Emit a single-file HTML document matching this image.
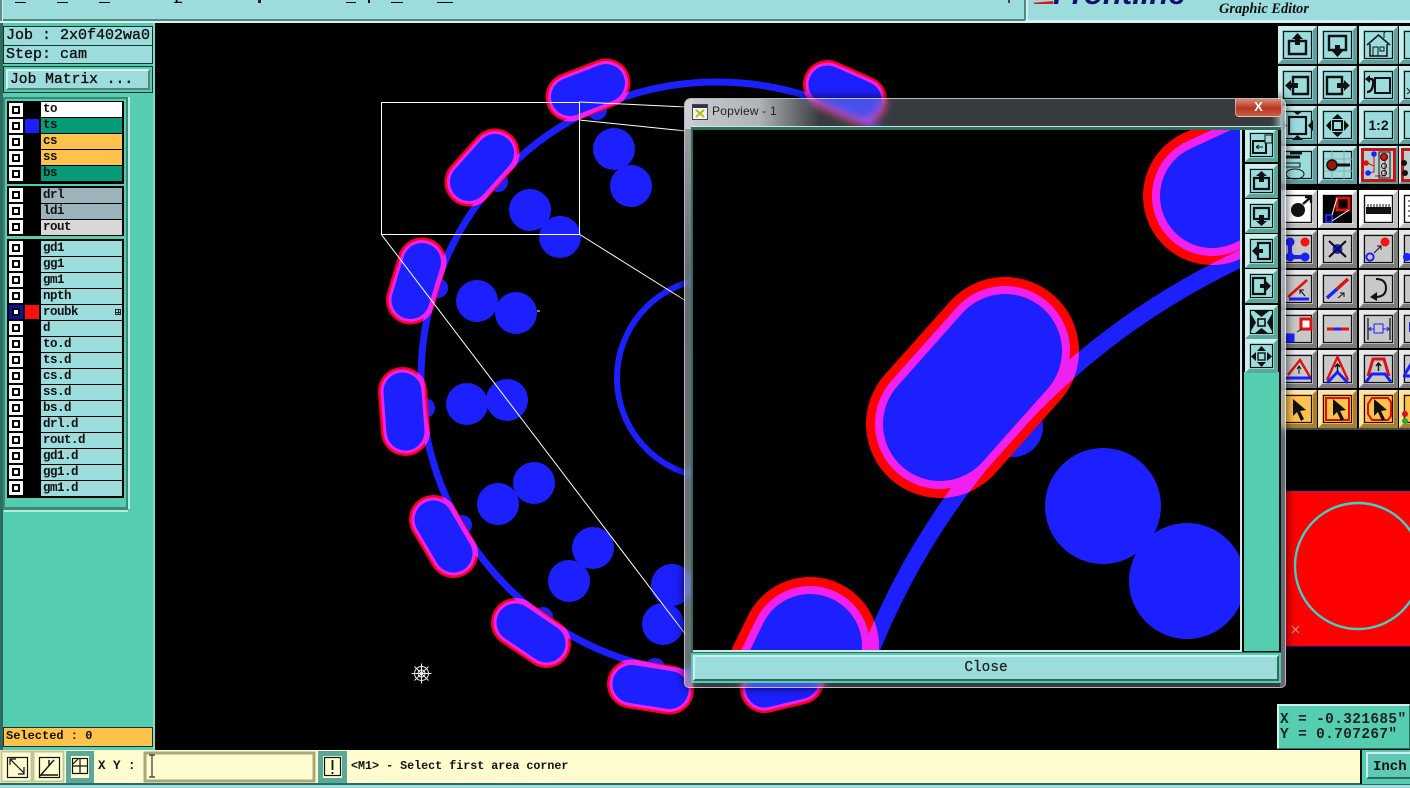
<!DOCTYPE html>
<html>
<head>
<meta charset="utf-8">
<style>
html,body{margin:0;padding:0;background:#000;width:1410px;height:788px;overflow:hidden}
div,svg,span{position:absolute;box-sizing:border-box}
body{font-family:"Liberation Mono",monospace;color:#111}
.t{white-space:pre;font-weight:bold}
.frame{background:#9ddcdc;border:1px solid #14352e}
.row{height:15px;left:41px;width:81px;background:#9ddcdc;font:bold 12.5px/14px "Liberation Mono",monospace;letter-spacing:-.5px;padding-left:2px;white-space:pre}
.chk{left:9px;width:14px;height:14px;background:#fff}
.chk:after{content:"";position:absolute;left:3px;top:3px;width:8px;height:8px;background:#fff;border:2px solid #000;box-sizing:border-box}
.blk{left:7px;width:117px;background:#000}
.bb{background:#fffdd0}
</style>
</head>
<body>
<svg width="1410" height="788" viewBox="0 0 1410 788" style="left:0;top:0">
<defs>
<path id="cp" d="M570 97L606 83M827.5 84.5L862.5 100M469 182L495 153M410.5 300L422 262M402.5 391.5L405.5 431.5M433.5 519.5L453.5 553.5M515.5 622.5L546.5 643.5M631.5 684L669.5 690M800 680L764.5 688.5" fill="none" stroke-linecap="round"/>
<mask id="m1" maskUnits="userSpaceOnUse" x="0" y="0" width="1410" height="788"><rect width="1410" height="788" fill="#000"/><use href="#cp" stroke="#fff" stroke-width="49"/></mask>
<path id="pp" d="M1005 351L940 424" fill="none" stroke-linecap="round"/>
<path id="pq" d="M1212 196L1320 146M810 646L771 726" fill="none" stroke-linecap="round"/>
<mask id="m2" maskUnits="userSpaceOnUse" x="0" y="0" width="1410" height="788"><rect width="1410" height="788" fill="#000"/><use href="#pp" stroke="#fff" stroke-width="148"/><use href="#pq" stroke="#fff" stroke-width="138"/></mask>
<clipPath id="pc"><rect x="693" y="130" width="547" height="520"/></clipPath>
</defs>
<circle cx="717" cy="378" r="296" fill="none" stroke="#1c20ff" stroke-width="7"/>
<circle cx="717" cy="378" r="100" fill="none" stroke="#1c20ff" stroke-width="6"/>
<g fill="#1c20ff">
<circle cx="614" cy="149" r="21"/><circle cx="631" cy="186" r="21"/><circle cx="530" cy="210" r="21"/><circle cx="560" cy="237" r="21"/>
<circle cx="477" cy="301" r="21"/><circle cx="516" cy="313" r="21"/><circle cx="467" cy="404" r="21"/><circle cx="507" cy="400" r="21"/>
<circle cx="534" cy="483" r="21"/><circle cx="498" cy="504" r="21"/><circle cx="593" cy="548" r="21"/><circle cx="569" cy="581" r="21"/>
<circle cx="672" cy="585" r="21"/><circle cx="663" cy="624" r="21"/>
<circle cx="597" cy="110" r="10"/><circle cx="498" cy="182" r="10"/><circle cx="438" cy="288" r="10"/><circle cx="425" cy="408" r="10"/><circle cx="462" cy="525" r="10"/><circle cx="543" cy="617" r="10"/><circle cx="655" cy="668" r="10"/>
</g>
<use href="#cp" stroke="#ff0018" stroke-width="49"/>
<use href="#cp" stroke="#f020f0" stroke-width="44"/>
<g mask="url(#m1)"><circle cx="717" cy="378" r="296" fill="none" stroke="#f020f0" stroke-width="7"/></g>
<use href="#cp" stroke="#1c20ff" stroke-width="38"/>
<path d="M537 311H540" stroke="#fff"/>
<rect x="381.5" y="102.5" width="198" height="132" fill="none" stroke="#fff"/>
<path d="M579 102L686 107M579 120L686 131M579 234L686 301M381 234L686 635" stroke="#fff" fill="none" stroke-width="1"/>
<g stroke="#eee" fill="none" stroke-width="1" transform="translate(421.5 673.5)">
<circle r="7"/><circle r="3.5"/><path d="M-10 0H10M0 -10V10M-7 -7L7 7M-7 7L7 -7"/>
</g>
</svg>

<!-- top bar -->
<div style="left:0;top:0;width:1410px;height:23px;background:#9ddcdc"></div>
<div style="left:0;top:0;width:2px;height:23px;background:#5f8f88"></div>
<div style="left:2px;top:0;width:1px;height:21px;background:#d5f2f2"></div>
<div style="left:3px;top:19px;width:1022px;height:2px;background:#55877f"></div>
<div style="left:0;top:21px;width:1028px;height:2px;background:#d5f2f2"></div>
<div style="left:1024px;top:0;width:2px;height:20px;background:#55877f"></div>
<div style="left:1026px;top:0;width:2px;height:22px;background:#d5f2f2"></div>
<div style="left:1028px;top:20px;width:382px;height:3px;background:#d5f2f2"></div>
<div style="left:15px;top:2px;width:11px;height:1px;background:#000"></div>
<div style="left:57px;top:2px;width:11px;height:1px;background:#000"></div>
<div style="left:99px;top:2px;width:11px;height:1px;background:#000"></div>
<div style="left:173px;top:0;width:9px;height:3px;background:#000;clip-path:polygon(0 60%,100% 60%,100% 100%,0 100%,30% 60%,30% 0,50% 0,50% 60%)"></div>
<div style="left:258px;top:0;width:3px;height:3px;background:#222"></div>
<div style="left:346px;top:2px;width:10px;height:1px;background:#000"></div>
<div style="left:368px;top:0;width:2px;height:3px;background:#111"></div>
<div style="left:391px;top:2px;width:12px;height:1px;background:#000"></div>
<div style="left:437px;top:2px;width:16px;height:1px;background:#000"></div>
<div style="left:1008px;top:0;width:2px;height:3px;background:#444"></div>
<div style="left:0;top:0;width:1410px;height:6px;overflow:hidden">
<div style="left:1053px;top:-24px;font:italic bold 31px 'Liberation Sans',sans-serif;color:#12126e;white-space:pre">Frontline</div>
</div>
<div style="left:1033px;top:1px;width:20px;height:3px;background:#e01818;clip-path:polygon(0 60%,100% 0,100% 100%,10% 100%)"></div>
<div style="left:1219px;top:1px;font:italic bold 14.4px/17px 'Liberation Serif',serif;color:#111;white-space:pre">Graphic Editor</div>

<!-- left panel -->
<div style="left:0;top:23px;width:155px;height:727px;background:#55cdb1"></div>
<div style="left:0;top:23px;width:3px;height:727px;background:#2f6b5f"></div>
<div style="left:153px;top:23px;width:2px;height:727px;background:#7fdac6"></div>
<div class="frame" style="left:3px;top:26px;width:150px;height:19px;border-width:1px 1px 0;font:15px/18px 'Liberation Mono',monospace;-webkit-text-stroke:.35px #111;padding-left:2px;white-space:pre">Job : 2x0f402wa0</div>
<div class="frame" style="left:3px;top:45px;width:150px;height:19px;font:15px/18px 'Liberation Mono',monospace;-webkit-text-stroke:.35px #111;padding-left:2px;white-space:pre">Step: cam</div>
<div style="left:3px;top:66px;width:150px;height:27px;background:#55cdb1;border:1px solid #14352e"></div>
<div style="left:6px;top:69px;width:144px;height:21px;background:#9ddcdc;border:2px solid;border-color:#d5f2f2 #55877f #55877f #d5f2f2;font:14.67px/18px 'Liberation Mono',monospace;-webkit-text-stroke:.35px #111;padding-left:2px;white-space:pre">Job Matrix ...</div>
<div style="left:3px;top:97px;width:125px;height:412px;background:#55cdb1;border:2px solid #3a8a78"></div>
<div style="left:128px;top:97px;width:25px;height:412px;background:#55cdb1;border-left:2px solid #b9ebdd"></div>
<div style="left:3px;top:507px;width:125px;height:3px;background:#3a8a78"></div>
<div style="left:4px;top:510px;width:124px;height:2px;background:#b9ebdd"></div>

<div class="blk" style="top:101px;height:83px"></div>
<div class="blk" style="top:186px;height:50px"></div>
<div class="blk" style="top:239px;height:259px"></div>

<div class="row" style="top:102px;background:#fff">to</div><div class="chk" style="top:103px"></div>
<div class="row" style="top:118px;background:#059a78">ts</div><div class="chk" style="top:119px"></div><div style="left:25px;top:119px;width:14px;height:14px;background:#1c20ff"></div>
<div class="row" style="top:134px;background:#ffc24d">cs</div><div class="chk" style="top:135px"></div>
<div class="row" style="top:150px;background:#ffc24d">ss</div><div class="chk" style="top:151px"></div>
<div class="row" style="top:166px;background:#059a78">bs</div><div class="chk" style="top:167px"></div>
<div class="row" style="top:188px;background:#9db3bc">drl</div><div class="chk" style="top:188px"></div>
<div class="row" style="top:204px;background:#9db3bc">ldi</div><div class="chk" style="top:204px"></div>
<div class="row" style="top:220px;background:#d8d8d8">rout</div><div class="chk" style="top:220px"></div>
<div class="row" style="top:241px">gd1</div><div class="chk" style="top:241px"></div>
<div class="row" style="top:257px">gg1</div><div class="chk" style="top:257px"></div>
<div class="row" style="top:273px">gm1</div><div class="chk" style="top:273px"></div>
<div class="row" style="top:289px">npth</div><div class="chk" style="top:289px"></div>
<div class="row" style="top:305px">roubk</div><div class="chk" style="top:305px;background:#10109a"></div><div style="left:25px;top:305px;width:14px;height:14px;background:#ff1010"></div>
<div style="left:115px;top:309px;width:6px;height:6px;border:1px solid #222;background:linear-gradient(#222,#222) center/100% 1px no-repeat,linear-gradient(#222,#222) center/1px 100% no-repeat"></div>
<div class="row" style="top:321px">d</div><div class="chk" style="top:321px"></div>
<div class="row" style="top:337px">to.d</div><div class="chk" style="top:337px"></div>
<div class="row" style="top:353px">ts.d</div><div class="chk" style="top:353px"></div>
<div class="row" style="top:369px">cs.d</div><div class="chk" style="top:369px"></div>
<div class="row" style="top:385px">ss.d</div><div class="chk" style="top:385px"></div>
<div class="row" style="top:401px">bs.d</div><div class="chk" style="top:401px"></div>
<div class="row" style="top:417px">drl.d</div><div class="chk" style="top:417px"></div>
<div class="row" style="top:433px">rout.d</div><div class="chk" style="top:433px"></div>
<div class="row" style="top:449px">gd1.d</div><div class="chk" style="top:449px"></div>
<div class="row" style="top:465px">gg1.d</div><div class="chk" style="top:465px"></div>
<div class="row" style="top:481px">gm1.d</div><div class="chk" style="top:481px"></div>

<div style="left:3px;top:727px;width:150px;height:20px;background:#ffc24d;border:1px solid #14352e;font:bold 12px/17px 'Liberation Mono',monospace;padding-left:2px;white-space:pre">Selected : 0</div>

<!-- bottom -->
<div class="bb" style="left:0;top:750px;width:1362px;height:34px"></div>
<div style="left:0;top:783px;width:1410px;height:2px;background:#2f6b5f"></div>
<div style="left:0;top:785px;width:1410px;height:3px;background:#9ddcdc"></div>
<svg width="350" height="36" viewBox="0 750 350 36" style="left:0;top:750px">
<g fill="none" stroke="#111">
<rect x="1.5" y="751.5" width="30" height="30" fill="#fffdd0" stroke="#c4c49a" stroke-width="2"/>
<rect x="7.5" y="757.5" width="20" height="20" stroke-width="1.2"/>
<path d="M10 759H16M10 759V765M10 759L24 773M24 767V774H18" stroke-width="1.2"/>
<rect x="33.5" y="751.5" width="30" height="30" fill="#fffdd0" stroke="#c4c49a" stroke-width="2"/>
<rect x="39.5" y="757.5" width="20" height="20" stroke-width="1.2"/>
<path d="M40 776L54 760M41 775H58M49 760V766" stroke-width="1.4"/>
<path d="M66 751H94V783H66Z M71 756V778H89V756Z" fill="#5aa89a" fill-rule="evenodd" stroke="none"/>
<rect x="72.5" y="758.5" width="15" height="15" stroke-width="1.2"/>
<path d="M73 766H88M80 758V774M73 764L78 759" stroke-width="1.2"/>
<rect x="145" y="753" width="169" height="28" fill="#fffdd0" stroke="#a8a878" stroke-width="3"/>
<path d="M318 751H347V783H318Z M323 756V778H342V756Z" fill="#5aa89a" fill-rule="evenodd" stroke="none"/>
<rect x="324.5" y="757.5" width="16" height="18" stroke-width="1.2"/>
<path d="M332.5 760V770M332.5 772V774" stroke-width="1.8"/>
<path d="M149 755H155M152 755V777M149 777H155" stroke-width="1.2" stroke="#333"/>
</g>
</svg>
<div class="t" style="left:98px;top:758px;font:bold 12.5px/16px 'Liberation Mono',monospace;white-space:pre">X Y :</div>
<div class="t" style="left:351px;top:758px;font:bold 11.7px/16px 'Liberation Mono',monospace">&lt;M1&gt; - Select first area corner</div>
<div style="left:1360px;top:750px;width:50px;height:34px;background:#55cdb1;border-left:2px solid #111;overflow:hidden">
<div style="left:4px;top:2px;width:60px;height:27px;background:#5ec9b5;border:2px solid;border-color:#cfeeee #2f6b5f #2f6b5f #cfeeee"></div>
<div style="left:11px;top:8px;font:bold 14px/18px 'Liberation Mono',monospace;white-space:pre">Inch</div>
</div>

<!-- coords -->
<div style="left:1277px;top:704px;width:133px;height:45px;background:#55cdb1;border:1px solid #2f6b5f;border-top:2px solid #cfeeee;border-left:2px solid #cfeeee"></div>
<div style="left:1280px;top:713px;font:bold 14.4px/15px 'Liberation Mono',monospace;white-space:pre;color:#222;letter-spacing:.4px">X = -0.321685"
Y = 0.707267"</div>

<!-- red preview -->
<svg width="124" height="156" viewBox="1286 491 124 156" style="left:1286px;top:491px">
<rect x="1286" y="491" width="124" height="156" fill="#ff0000"/>
<path d="M1286 491.5H1410" stroke="#b0108a"/>
<path d="M1286 646.5H1410" stroke="#300090"/>
<circle cx="1358" cy="566" r="63" fill="none" stroke="#45cfc4" stroke-width="2.4"/>
<path d="M1292 626L1299 633M1299 626L1292 633" stroke="#c8a0a0"/>
</svg>

<!-- right toolbar -->
<svg width="132" height="408" viewBox="1278 24 132 408" style="left:1278px;top:24px">
<defs>
<g id="c"><rect width="39" height="38" fill="#9ddcdc"/><path d="M0 0H39L35 4H4V34L0 38Z" fill="#cfeeee"/><path d="M39 0V38H0L4 34H35V4Z" fill="#5f9f9f"/><rect x="5.5" y="5.5" width="28" height="27" fill="none" stroke="#111" stroke-width="1.2"/></g>
<g id="g"><rect width="39" height="38" fill="#c8c8c8"/><path d="M0 0H39L35 4H4V34L0 38Z" fill="#e8e8e8"/><path d="M39 0V38H0L4 34H35V4Z" fill="#7c7c7c"/><rect x="5.5" y="5.5" width="28" height="27" fill="none" stroke="#111" stroke-width="1.2"/></g>
<g id="o"><rect width="39" height="38" fill="#ffc24d"/><path d="M0 0H39L35 4H4V34L0 38Z" fill="#ffe3a8"/><path d="M39 0V38H0L4 34H35V4Z" fill="#a87f30"/><rect x="5.5" y="5.5" width="28" height="27" fill="none" stroke="#111" stroke-width="1.2"/></g>
<g id="w"><rect width="39" height="38" fill="#fff"/><path d="M39 0V38H0L4 34H35V4Z" fill="#c0c0c0"/><rect x="5.5" y="5.5" width="28" height="27" fill="none" stroke="#111" stroke-width="1.4"/></g>
<g id="r"><rect width="39" height="38" fill="#9ddcdc"/><path d="M0 0H39L35 4H4V34L0 38Z" fill="#cfeeee"/><path d="M39 0V38H0L4 34H35V4Z" fill="#5f9f9f"/><rect x="3.5" y="3.5" width="32" height="31" fill="#b8d0d0" stroke="#c81414" stroke-width="3"/></g>
<path id="cur" d="M0 0V17L4 13L8 22L11 20L7 12L13 11Z" fill="#111"/>
</defs>
<rect x="1278" y="24" width="132" height="408" fill="#000"/>
<!-- row1 -->
<g transform="translate(1278 26)"><use href="#c"/><path d="M11 15H28V28H11Z" fill="none" stroke="#111" stroke-width="2.4"/><path d="M19.5 7L25 13H22V19H17V13H14Z" fill="#111"/></g>
<g transform="translate(1318 26)"><use href="#c"/><path d="M11 10H28V24H11Z" fill="none" stroke="#111" stroke-width="2.4"/><path d="M19.5 31L14 25H17V19H22V25H25Z" fill="#111"/></g>
<g transform="translate(1359 26)"><use href="#c"/><path d="M8 19L19.5 9L31 19M11 18V30H28V18" fill="none" stroke="#111" stroke-width="1.5"/><rect x="14" y="21" width="5" height="9" fill="none" stroke="#111"/><rect x="21" y="21" width="4" height="4" fill="none" stroke="#111"/><path d="M25 12V7L27 5" stroke="#111" fill="none"/></g>
<g transform="translate(1399 26)"><use href="#c"/><path d="M12 12H30V26H12Z" fill="none" stroke="#111" stroke-width="2"/></g>
<!-- row2 -->
<g transform="translate(1278 66)"><use href="#c"/><path d="M15 11H30V28H15Z" fill="none" stroke="#111" stroke-width="2.4"/><path d="M7 19.5L13 14V17H20V22H13V25Z" fill="#111"/></g>
<g transform="translate(1318 66)"><use href="#c"/><path d="M9 11H24V28H9Z" fill="none" stroke="#111" stroke-width="2.4"/><path d="M32 19.5L26 14V17H19V22H26V25Z" fill="#111"/></g>
<g transform="translate(1359 66)"><use href="#c"/><rect x="16" y="12" width="15" height="15" fill="none" stroke="#111" stroke-width="2"/><path d="M8 13H12Q15 13 14 19Q13 26 8 26" fill="none" stroke="#111" stroke-width="2.4"/><path d="M6 13L11 9V17Z" fill="#111"/></g>
<g transform="translate(1399 66)"><use href="#c"/><path d="M8 22L13 28M8 28L13 24" stroke="#111"/></g>
<!-- row3 -->
<g transform="translate(1278 106)"><use href="#c"/><rect x="11" y="11" width="17" height="17" fill="none" stroke="#111" stroke-width="2.2"/><path d="M19.5 9L14 5H25ZM19.5 29L14 34H25ZM9 19.5L5 14V25ZM30 19.5L35 14V25Z" fill="#111"/></g>
<g transform="translate(1318 106)"><use href="#c"/><rect x="15" y="15" width="9" height="9" fill="none" stroke="#111" stroke-width="2"/><path d="M19.5 8L14 13H25ZM19.5 31L14 26H25ZM8 19.5L13 14V25ZM31 19.5L26 14V25Z" fill="#111"/></g>
<g transform="translate(1359 106)"><use href="#c"/><text x="19.5" y="24" text-anchor="middle" font-family="Liberation Sans,sans-serif" font-weight="bold" font-size="14" fill="#111">1:2</text></g>
<g transform="translate(1399 106)"><use href="#c"/><rect x="12" y="11" width="20" height="17" fill="none" stroke="#111" stroke-width="2"/></g>
<!-- row4 -->
<g transform="translate(1278 146)"><use href="#c"/><path d="M8 11H22M12 7H24" stroke="#111" stroke-width="3"/><path d="M6 17H22V21H6Z" fill="#9ddcdc" stroke="#111"/><ellipse cx="17" cy="28" rx="9" ry="5" fill="none" stroke="#111"/></g>
<g transform="translate(1318 146)"><use href="#c"/><path d="M6 13H34M6 25H34M14 5V33M26 5V33" stroke="#9aa" /><circle cx="14" cy="19" r="5" fill="#a01414" stroke="#111" stroke-width="1.5"/><path d="M18 19H32" stroke="#111" stroke-width="3"/></g>
<g transform="translate(1359 146)"><use href="#r"/><path d="M15 8V20L8 17M15 20V26L9 27M26 13V30H16" fill="none" stroke="#c81414"/><rect x="20" y="6" width="11" height="26" fill="none" stroke="#111"/><circle cx="25" cy="11" r="3.5" fill="#e01010" stroke="#111"/><circle cx="25" cy="20" r="2.5" fill="none" stroke="#111"/><circle cx="25" cy="27" r="2.5" fill="none" stroke="#111"/><circle cx="15" cy="8" r="2.8" fill="#1c20ff"/><circle cx="7" cy="17" r="2.8" fill="#e01010"/><circle cx="9" cy="27" r="2.8" fill="#1c20ff"/></g>
<g transform="translate(1399 146)"><use href="#r"/><circle cx="5" cy="17" r="3" fill="#111"/><circle cx="6" cy="27" r="3" fill="#111"/></g>
<!-- row5 -->
<g transform="translate(1278 190)"><use href="#w"/><circle cx="20" cy="20" r="7" fill="#111"/><path d="M25 14L33 7M27 7H33V13" stroke="#111" stroke-width="2.4" fill="none"/></g>
<g transform="translate(1318 190)"><use href="#w"/><rect x="5" y="5" width="29" height="28" fill="#000"/><path d="M19 8H31V20H19Z" fill="none" stroke="#e01010" stroke-width="3"/><path d="M8 25H14V32H8Z" fill="none" stroke="#1c20ff" stroke-width="2"/><path d="M14 25L19 8M14 31L31 20" stroke="#fff"/></g>
<g transform="translate(1359 190)"><use href="#w"/><rect x="7" y="17" width="25" height="7" fill="#111"/><path d="M9 14V17M12 14V17M15 14V17M18 14V17M21 14V17M24 14V17M27 14V17M30 14V17" stroke="#111"/></g>
<g transform="translate(1399 190)"><use href="#w"/><path d="M10 10V30" stroke="#111" stroke-dasharray="2 3"/></g>
<!-- row6 -->
<g transform="translate(1278 230)"><use href="#g"/><path d="M12 12V27H27" stroke="#1c20ff" stroke-width="4" fill="none"/><circle cx="12" cy="12" r="4.5" fill="#1c20ff"/><circle cx="12" cy="27" r="4.5" fill="#1c20ff"/><circle cx="27" cy="27" r="4.5" fill="#1c20ff"/><circle cx="27" cy="12" r="4.5" fill="#ff1010"/></g>
<g transform="translate(1318 230)"><use href="#g"/><circle cx="19.5" cy="19" r="5" fill="#1c20ff"/><path d="M11 11L28 27M28 11L11 27" stroke="#111" stroke-width="2.2"/></g>
<g transform="translate(1359 230)"><use href="#g"/><circle cx="26" cy="12" r="4.5" fill="#ff1010"/><circle cx="11" cy="27" r="3.6" fill="none" stroke="#1c20ff" stroke-width="2"/><path d="M15 23L22 16M18 16H22V20" stroke="#111" fill="none"/></g>
<g transform="translate(1399 230)"><use href="#g"/><circle cx="8" cy="27" r="4" fill="#1c20ff"/></g>
<!-- row7 -->
<g transform="translate(1278 270)"><use href="#g"/><path d="M10 27L29 10" stroke="#e01010" stroke-width="2.6"/><path d="M11 29H31" stroke="#1c20ff" stroke-width="3"/><path d="M27 26L22 20M22 24V20H26" stroke="#111" fill="none"/></g>
<g transform="translate(1318 270)"><use href="#g"/><path d="M9 28L19 19" stroke="#1c20ff" stroke-width="3.4"/><path d="M19 19L30 9" stroke="#e01010" stroke-width="3.4"/><path d="M20 28L26 23M22 23H26V27" stroke="#111" fill="none"/></g>
<g transform="translate(1359 270)"><use href="#g"/><path d="M17 9Q27 9 27 18Q27 27 16 27" fill="none" stroke="#111" stroke-width="2"/><path d="M11 27L18 22V31Z" fill="#111"/></g>
<g transform="translate(1399 270)"><use href="#g"/><path d="M11 15H20M11 22H20" stroke="#1c20ff" stroke-width="3"/></g>
<!-- row8 -->
<g transform="translate(1278 310)"><use href="#g"/><rect x="23" y="9" width="10" height="10" fill="#fff" stroke="#e01010" stroke-width="3"/><rect x="8" y="24" width="8" height="8" fill="#1c20ff" stroke="#1c20ff"/><path d="M19 22L24 19" stroke="#111"/></g>
<g transform="translate(1318 310)"><use href="#g"/><path d="M9 19H16" stroke="#e01010" stroke-width="3"/><path d="M16 19H23" stroke="#1c20ff" stroke-width="3"/><path d="M23 19H31" stroke="#e01010" stroke-width="3"/></g>
<g transform="translate(1359 310)"><use href="#g"/><path d="M9 8V30M31 8V30" stroke="#111" stroke-width="1.2"/><rect x="15" y="14" width="9" height="9" fill="none" stroke="#1c20ff"/><path d="M10 19H15M24 19H30M12 17L10 19L12 21M28 17L30 19L28 21" stroke="#1c20ff" fill="none"/></g>
<g transform="translate(1399 310)"><use href="#g"/><path d="M10 12H22V22H10Z" fill="#1c20ff"/></g>
<!-- row9 -->
<g transform="translate(1278 350)"><use href="#g"/><path d="M10 25L22 10L32 27" fill="none" stroke="#e01010" stroke-width="2.4"/><path d="M8 28H33" stroke="#1c20ff" stroke-width="3"/><path d="M21 24V17M19 19L21 16L23 19" stroke="#111" fill="none"/></g>
<g transform="translate(1318 350)"><use href="#g"/><path d="M9 30L19.5 7L30 30" fill="none" stroke="#e01010" stroke-width="2.4"/><path d="M9 33L19.5 22L30 33" fill="none" stroke="#1c20ff" stroke-width="3"/><path d="M19.5 22V14M17 17L19.5 14L22 17" stroke="#111" fill="none" stroke-width="1.4"/></g>
<g transform="translate(1359 350)"><use href="#g"/><path d="M9 26L14 9H25L30 26" fill="none" stroke="#e01010" stroke-width="3"/><path d="M7 32L13 24H26L32 32" fill="none" stroke="#1c20ff" stroke-width="3"/><path d="M19.5 21V13M17 16L19.5 13L22 16" stroke="#111" fill="none" stroke-width="1.4"/></g>
<g transform="translate(1399 350)"><use href="#g"/><path d="M6 24L12 14M4 26H12" stroke="#1c20ff" stroke-width="3"/></g>
<!-- row10 -->
<g transform="translate(1278 390)"><use href="#o"/><use href="#cur" transform="translate(15 9)"/></g>
<g transform="translate(1318 390)"><use href="#o"/><rect x="8" y="8" width="23" height="22" fill="none" stroke="#e01010" stroke-width="2"/><use href="#cur" transform="translate(15 9)"/></g>
<g transform="translate(1359 390)"><use href="#o"/><path d="M13 8H29L32 12V26L29 30H13L9 24V14Z" fill="none" stroke="#e01010" stroke-width="2"/><use href="#cur" transform="translate(15 9)"/></g>
<g transform="translate(1399 390)"><use href="#o"/><circle cx="6" cy="24" r="3" fill="#e01010"/><circle cx="6" cy="31" r="3" fill="#20b020"/></g>
<rect x="1278" y="428" width="132" height="2" fill="#3a4a48"/>
</svg>

<!-- popview window -->
<div style="left:684px;top:98px;width:602px;height:590px;border-radius:7px 7px 5px 5px;backdrop-filter:blur(4px);background:rgba(170,185,195,.32);border:1px solid rgba(235,240,245,.7);box-shadow:0 0 10px rgba(0,0,0,.75);overflow:hidden">
<div style="left:0;top:0;width:135px;height:30px;background:linear-gradient(90deg,rgba(225,230,235,.85) 0%,rgba(215,220,225,.75) 55%,rgba(200,205,215,0) 100%)"></div>
<div style="left:0;top:0;width:8px;height:590px;background:linear-gradient(180deg,rgba(210,215,220,.7),rgba(130,140,145,.6) 30%,rgba(170,180,185,.45) 100%)"></div>
<div style="left:595px;top:0;width:6px;height:590px;background:rgba(190,200,205,.35)"></div>
</div>
<div style="left:1235px;top:99px;width:47px;height:18px;border-radius:0 0 4px 4px;background:linear-gradient(#d88a78,#b8341f 55%,#c8604a);border:1px solid rgba(255,255,255,.45);border-top:0"></div>
<div style="left:1235px;top:97px;width:47px;height:20px;text-align:center;font:bold 13px/20px 'Liberation Sans',sans-serif;color:#fff">X</div>
<svg width="16" height="16" style="left:692px;top:104px" viewBox="0 0 16 16"><rect x=".5" y=".5" width="15" height="15" fill="#f4f4e8" stroke="#445"/><rect x="1" y="1" width="14" height="3" fill="#334"/><path d="M4 6L12 13M12 6L4 13" stroke="#b8b820" stroke-width="2"/></svg>
<div style="left:712px;top:104px;font:12px/15px 'Liberation Sans',sans-serif;color:#222;white-space:pre;letter-spacing:.2px">Popview - 1</div>

<div style="left:691px;top:126px;width:590px;height:557px;background:#9ddcdc;border-top:1px solid #c8e8e4"></div>
<div style="left:691px;top:127px;width:590px;height:3px;background:#2f6b5f"></div>
<div style="left:691px;top:127px;width:2px;height:525px;background:#2f6b5f"></div>

<svg width="547" height="520" viewBox="693 130 547 520" style="left:693px;top:130px;background:#000">
<g clip-path="url(#pc)">
<path d="M1240 259A740 740 0 0 0 871 650" fill="none" stroke="#1c20ff" stroke-width="17" stroke-linecap="square"/>
<circle cx="1103" cy="506" r="58" fill="#1c20ff"/><circle cx="1187" cy="581" r="58" fill="#1c20ff"/><circle cx="1013" cy="427" r="30" fill="#1c20ff"/>
<use href="#pp" stroke="#ff0000" stroke-width="148"/><use href="#pq" stroke="#ff0000" stroke-width="138"/>
<use href="#pp" stroke="#f020f0" stroke-width="130"/><use href="#pq" stroke="#f020f0" stroke-width="120"/>
<g mask="url(#m2)"><path d="M1240 259A740 740 0 0 0 871 650" fill="none" stroke="#f020f0" stroke-width="17" stroke-linecap="square"/></g>
<use href="#pp" stroke="#1c20ff" stroke-width="114"/><use href="#pq" stroke="#1c20ff" stroke-width="104"/>
</g>
</svg>
<div style="left:1240px;top:130px;width:2px;height:522px;background:#c8ecec"></div>
<div style="left:693px;top:650px;width:549px;height:2px;background:#c8ecec"></div>

<!-- popup toolbar -->
<svg width="39" height="523" viewBox="1242 130 39 523" style="left:1242px;top:130px">
<defs>
<g id="p"><rect width="33" height="34" fill="#9ddcdc"/><path d="M0 0H33L29 4H4V30L0 34Z" fill="#cfeeee"/><path d="M33 0V34H0L4 30H29V4Z" fill="#5aa89a"/><rect x="5.5" y="5.5" width="22" height="23" fill="none" stroke="#111" stroke-width="1.1"/></g>
</defs>
<rect x="1242" y="130" width="39" height="523" fill="#55cdb1"/>
<rect x="1242" y="127" width="39" height="245" fill="#000"/>
<rect x="1242" y="372" width="2" height="281" fill="#000"/>
<rect x="1279" y="130" width="2" height="522" fill="#111"/>
<rect x="1242" y="651" width="39" height="2" fill="#111"/>
<g transform="translate(1245 128)"><use href="#p"/><rect x="8" y="13" width="13" height="12" fill="none" stroke="#111" stroke-width="2"/><rect x="20" y="7" width="7" height="8" fill="#9ddcdc" stroke="#111"/><path d="M11 19H18M11 19L14 17M11 19L14 21" stroke="#111" fill="none"/></g>
<g transform="translate(1245 164)"><use href="#p"/><path d="M9 14H24V25H9Z" fill="none" stroke="#111" stroke-width="2.2"/><path d="M16.5 7L22 12H19V18H14V12H11Z" fill="#111"/></g>
<g transform="translate(1245 199)"><use href="#p"/><path d="M9 9H24V20H9Z" fill="none" stroke="#111" stroke-width="2.2"/><path d="M16.5 27L22 22H19V16H14V22H11Z" fill="#111"/></g>
<g transform="translate(1245 234)"><use href="#p"/><path d="M13 9H25V25H13Z" fill="none" stroke="#111" stroke-width="2.2"/><path d="M7 17L12 12V15H18V19H12V22Z" fill="#111"/></g>
<g transform="translate(1245 269)"><use href="#p"/><path d="M8 9H20V25H8Z" fill="none" stroke="#111" stroke-width="2.2"/><path d="M26 17L21 12V15H15V19H21V22Z" fill="#111"/></g>
<g transform="translate(1245 305)"><use href="#p"/><rect x="13" y="14" width="7" height="7" fill="none" stroke="#111" stroke-width="1.6"/><path d="M16.5 12L9 6H24ZM16.5 23L9 29H24ZM11 17.5L6 9V26ZM22 17.5L27 9V26Z" fill="#111"/></g>
<g transform="translate(1245 339)"><use href="#p"/><rect x="13" y="14" width="7" height="7" fill="none" stroke="#111" stroke-width="1.4"/><path d="M16.5 7L12 12H21ZM16.5 28L12 23H21ZM6 17.5L11 13V22ZM27 17.5L22 13V22Z" fill="#111"/></g>
</svg>

<!-- close -->
<div style="left:691px;top:652px;width:590px;height:31px;background:#55cdb1;border-top:1px solid #2f6b5f"></div>
<div style="left:693px;top:655px;width:586px;height:26px;background:#9ddcdc;border:2px solid;border-color:#cfeeee #2f6b5f #2f6b5f #cfeeee;text-align:center;font:14.4px/22px 'Liberation Mono',monospace;-webkit-text-stroke:.25px #222;color:#222">Close</div>
</body>
</html>
